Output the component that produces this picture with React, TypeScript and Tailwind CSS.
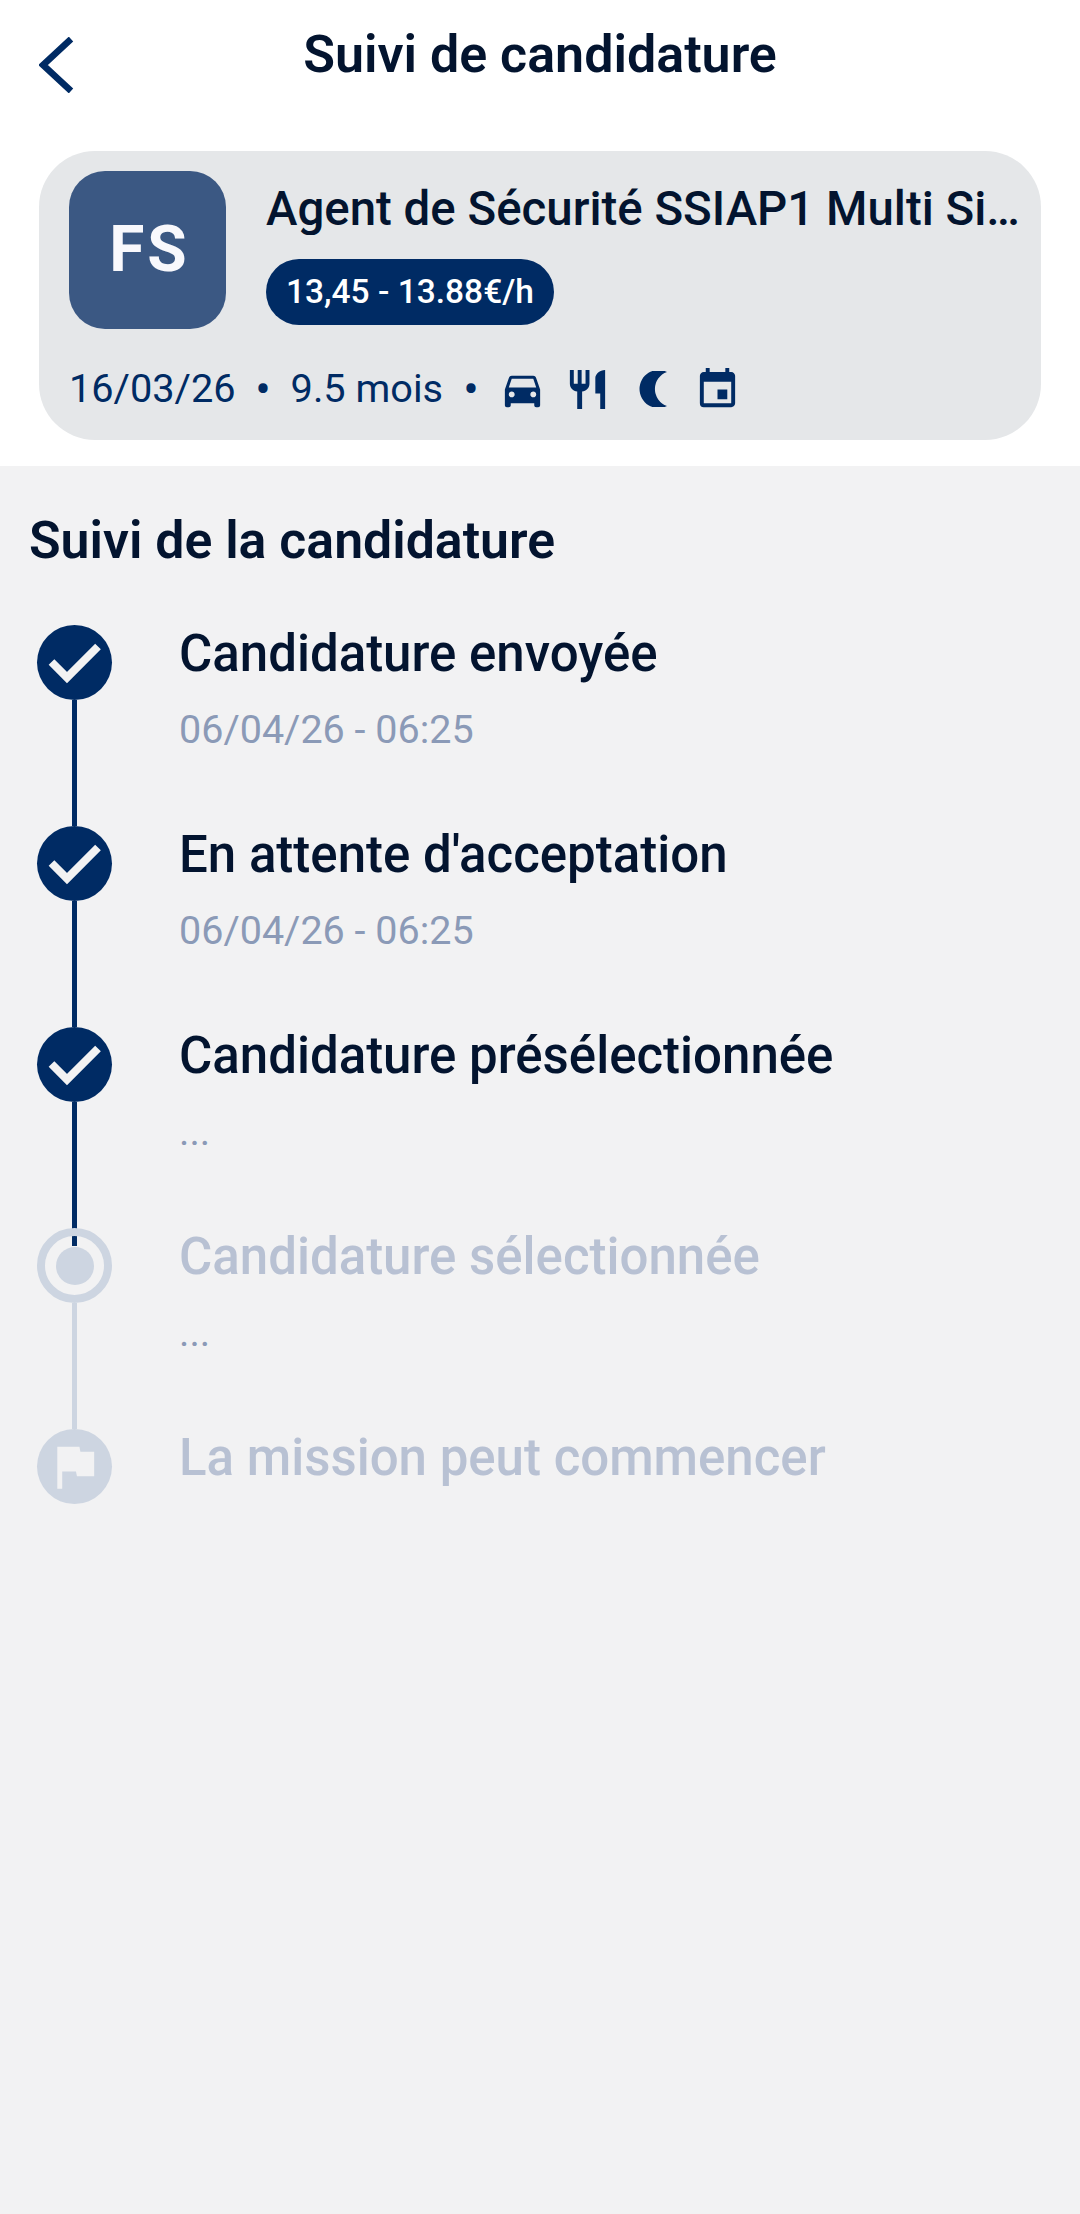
import { MdDirectionsCar, MdRestaurant, MdEvent, MdAssistantPhoto } from "react-icons/md";

interface Step {
  title: string;
  date?: string;
  state: "done" | "current" | "todo";
}

const steps: Step[] = [
  { title: "Candidature envoyée", date: "06/04/26 - 06:25", state: "done" },
  { title: "En attente d'acceptation", date: "06/04/26 - 06:25", state: "done" },
  { title: "Candidature présélectionnée", date: "...", state: "done" },
  { title: "Candidature sélectionnée", date: "...", state: "current" },
  { title: "La mission peut commencer", state: "todo" },
];

const StepDot = ({ state }: { state: Step["state"] }) => {
  if (state === "done") {
    return (
      <div className="w-[75px] h-[75px] rounded-full bg-[#002b64] shrink-0">
        <svg className="w-full h-full" viewBox="0 0 75 75" fill="none">
          <path d="M14.5 37 L30 52.5 L61 21.5" stroke="#f2f2f3" strokeWidth="8" />
        </svg>
      </div>
    );
  }
  if (state === "current") {
    return (
      <div className="w-[75px] h-[75px] rounded-full border-[8px] border-[#cdd5e1] flex items-center justify-center shrink-0">
        <div className="w-[38px] h-[38px] rounded-full bg-[#cdd5e1]" />
      </div>
    );
  }
  return (
    <div className="w-[75px] h-[75px] rounded-full bg-[#cdd5e1] flex items-center justify-center shrink-0">
      <MdAssistantPhoto className="w-[59px] h-[59px] text-[#f2f2f3]" />
    </div>
  );
};

export default function App() {
  return (
    <div className="w-[1080px] h-[2214px] bg-[#f2f2f3] font-['Roboto',sans-serif] flex flex-col overflow-hidden">
      <div className="bg-white h-[466px] px-[39px] flex flex-col shrink-0">
        {/* Header */}
        <div className="h-[151px] relative flex justify-center">
          <svg className="absolute left-0 top-[37px] w-[35px] h-[56px]" viewBox="0 0 35 56" fill="none">
            <path d="M32 2 L4 28 L32 54" stroke="#002b64" strokeWidth="6.5" />
          </svg>
          <h1 className="text-[52px] leading-[60px] mt-[25px] font-semibold text-[#03142f]">Suivi de candidature</h1>
        </div>

        {/* Offer card */}
        <div className="h-[289px] bg-[#e5e7e9] rounded-[56px] pl-[30px] pr-[20px] pt-[20px]">
          <div className="flex gap-[40px] h-[158px]">
            <div className="w-[157px] h-[158px] rounded-[36px] bg-[#3b5883] flex items-center justify-center shrink-0">
              <span className="text-[64px] font-bold tracking-[3px] pl-[4px] text-[#f8f8fc]">FS</span>
            </div>
            <div className="min-w-0 flex-1 pt-[12px]">
              <p className="text-[47.4px] leading-[52px] font-medium text-[#03142f] truncate">Agent de Sécurité SSIAP1 Multi Sites</p>
              <span className="inline-flex items-center mt-[24px] h-[66px] px-[20px] rounded-[33px] bg-[#002b64] text-white text-[33.5px] font-medium">13,45 - 13.88€/h</span>
            </div>
          </div>
          <div className="flex items-center h-[50px] mt-[35px] text-[#002b64] text-[39.7px]">
            <span>16/03/26</span>
            <span className="w-[55px] text-center text-[46px] leading-none">•</span>
            <span>9.5 mois</span>
            <span className="w-[56px] text-center text-[46px] leading-none">•</span>
            <div className="flex items-center gap-[18px]">
              <MdDirectionsCar className="w-[47px] h-[47px]" />
              <MdRestaurant className="w-[47px] h-[47px]" />
              <div className="w-[47px] h-[47px] flex items-center justify-center">
                <svg className="w-[28px] h-[36px]" viewBox="0 0 28 36" fill="currentColor">
                  <path d="M28 1 A19 19 0 1 0 28 35 A18 18 0 0 1 28 1Z" />
                </svg>
              </div>
              <MdEvent className="w-[47px] h-[47px]" />
            </div>
          </div>
        </div>
      </div>

      {/* Timeline */}
      <div className="pl-[29px] pt-[48px]">
        <h2 className="text-[51.8px] leading-[54px] font-semibold text-[#03142f]">Suivi de la candidature</h2>
        <div className="mt-[57px] pl-[8px] flex flex-col">
          {steps.map((step, index) => {
            const dimmed = step.state === "current" || step.state === "todo";
            const next = steps[index + 1];
            return (
              <div key={step.title} className="flex h-[201px]">
                <div className="relative w-[75px] flex flex-col items-center shrink-0">
                  <StepDot state={step.state} />
                  {next && (
                    <div className={`w-[5px] flex-1 ${step.state === "done" ? "bg-[#002b64]" : "bg-[#cdd5e1]"}`} />
                  )}
                  {step.state === "done" && next?.state === "current" && (
                    <div className="absolute left-[35px] top-[190px] w-[5px] h-[29px] bg-[#002b64]" />
                  )}
                </div>
                <div className="ml-[67px]">
                  <p className={`text-[51px] leading-[58px] font-medium ${dimmed ? "text-[#b8c1d3]" : "text-[#03142f]"}`}>{step.title}</p>
                  {step.date && (
                    <p className="text-[39.5px] leading-[44px] mt-[25px] text-[#8b9ab7]">{step.date}</p>
                  )}
                </div>
              </div>
            );
          })}
        </div>
      </div>
    </div>
  );
}
